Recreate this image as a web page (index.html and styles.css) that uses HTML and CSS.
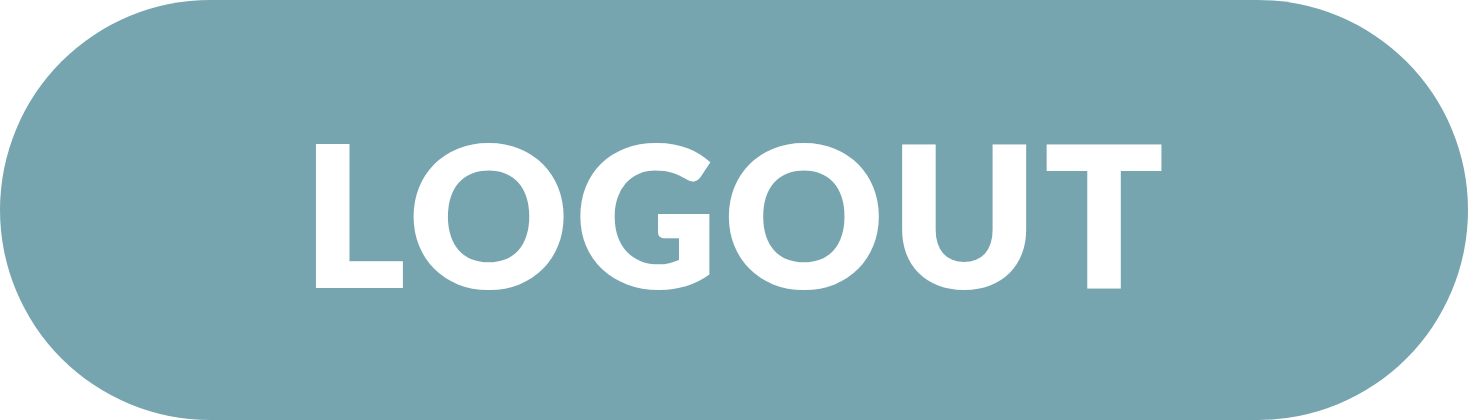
FILE: index.html
```html
<!DOCTYPE html>
<html>
<head>
<meta charset="utf-8">
<link rel="stylesheet" href="styles.css">
</head>
<body>
<button class="logout-btn">LOGOUT</button>
</body>
</html>
```

FILE: styles.css
```css
html, body {
  margin: 0;
  padding: 0;
  background: #ffffff;
}
.logout-btn {
  display: flex;
  align-items: center;
  justify-content: center;
  width: 1468px;
  height: 420px;
  margin: 0;
  padding: 3px 0 0 4px;
  box-sizing: border-box;
  border: none;
  border-radius: 210px;
  background: #76a5b0;
  color: #ffffff;
  font-family: "Lato", "Noto Sans", sans-serif;
  font-weight: 800;
  font-size: 198px;
  letter-spacing: 5.5px;
  line-height: 1;
}
```
